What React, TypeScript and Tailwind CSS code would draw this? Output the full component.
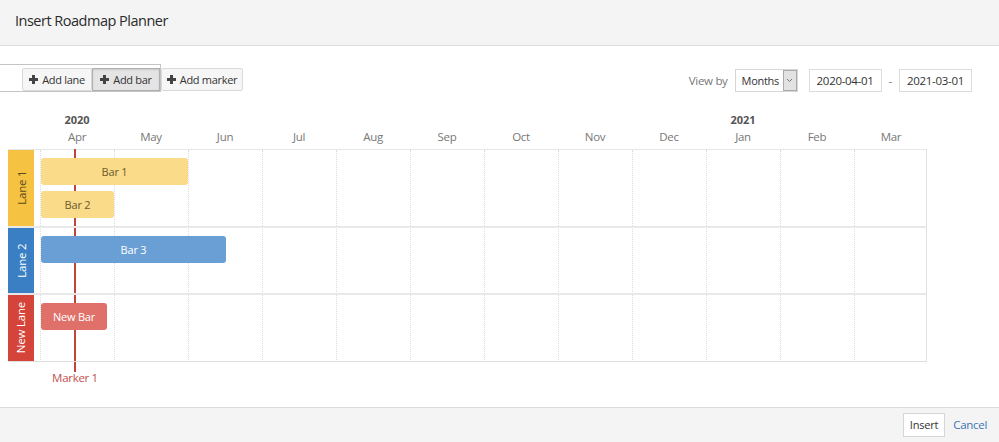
import React from 'react';

const months = ['Apr', 'May', 'Jun', 'Jul', 'Aug', 'Sep', 'Oct', 'Nov', 'Dec', 'Jan', 'Feb', 'Mar'];

type Bar = { label: string; width: number; bg: string; text: string };
type Lane = { name: string; color: string; labelText: string; height: number; bars: Bar[] };

const lanes: Lane[] = [
  {
    name: 'Lane 1',
    color: 'bg-[#f5c242]',
    labelText: 'text-[#5b4a1c]',
    height: 78,
    bars: [
      { label: 'Bar 1', width: 147, bg: 'bg-[#fadb8a]', text: 'text-[#6b5a2a]' },
      { label: 'Bar 2', width: 73, bg: 'bg-[#fadb8a]', text: 'text-[#6b5a2a]' },
    ],
  },
  {
    name: 'Lane 2',
    color: 'bg-[#3a7fc3]',
    labelText: 'text-white',
    height: 67,
    bars: [{ label: 'Bar 3', width: 185, bg: 'bg-[#6a9fd6]', text: 'text-white' }],
  },
  {
    name: 'New Lane',
    color: 'bg-[#d5443a]',
    labelText: 'text-white',
    height: 67,
    bars: [{ label: 'New Bar', width: 66, bg: 'bg-[#e0716a]', text: 'text-white' }],
  },
];

function Plus() {
  return (
    <svg width="9" height="9" viewBox="0 0 9 9" className="mr-[4px] mb-[2px] shrink-0">
      <path d="M3 0h3v3h3v3H6v3H3V6H0V3h3z" fill="#444" />
    </svg>
  );
}

function ToolButton({ children, active, width }: { children: React.ReactNode; active?: boolean; width: string }) {
  return (
    <button
      className={
        (active
          ? 'border-[#b0b0b0] bg-[#e4e4e4] shadow-[inset_0_1px_2px_rgba(0,0,0,0.12)] '
          : 'border-[#d9d9d9] bg-[#f6f6f6] rounded-[2px] ') +
        width +
        ' flex items-center justify-center shrink-0 whitespace-nowrap h-[23px] pt-px border text-[11px] tracking-[-0.3px] text-[#333]'
      }
    >
      <Plus />
      {children}
    </button>
  );
}

export default function App() {
  return (
    <div className="w-[999px] h-[442px] flex flex-col bg-white overflow-hidden font-['Open_Sans',sans-serif] text-[#333]">
      <div className="h-[46px] shrink-0 bg-[#f4f4f4] border-b border-[#dcdcdc] flex items-center px-[15px]">
        <h1 className="text-[14.5px] tracking-[-0.5px] text-[#2b2b2b] mb-[3px]">Insert Roadmap Planner</h1>
      </div>

      <div className="flex-1 relative">
        <div className="flex items-start justify-between mt-[18px] pr-[27px]">
          <div className="flex items-start">
            <div className="h-[28px] pl-[22px] border border-l-0 border-[#c4c4c4] flex items-end">
              <ToolButton width="w-[70px]">Add lane</ToolButton>
              <ToolButton width="w-[68px]" active>
                Add bar
              </ToolButton>
            </div>
            <div className="pt-[4px]">
              <ToolButton width="w-[82px]">Add marker</ToolButton>
            </div>
          </div>
          <div className="flex items-center pt-[5px] text-[11.5px] tracking-[-0.3px]">
            <span className="text-[#777] mr-[7px]">View by</span>
            <div className="flex items-center w-[63px] h-[23px] border border-[#d6d6d6] pl-[6px] bg-white">
              <span className="flex-1 pt-[1px] text-[11px]">Months</span>
              <span className="w-[14px] h-[21px] bg-[#e2e2e2] border border-[#aaa] flex items-center justify-center">
                <svg width="7" height="5" viewBox="0 0 7 5">
                  <path d="M1 1l2.5 2.5L6 1" stroke="#777" fill="none" strokeWidth="1" />
                </svg>
              </span>
            </div>
            <div className="ml-[11px] w-[73px] h-[23px] border border-[#dcdcdc] flex items-center pl-[7px]">2020-04-01</div>
            <span className="mx-[7px] text-[#777]">-</span>
            <div className="w-[73px] h-[23px] border border-[#dcdcdc] flex items-center pl-[7px]">2021-03-01</div>
          </div>
        </div>

        <div className="pl-[8px] mt-[20px]">
          <div className="flex pl-[32px] h-[15px] text-[11px] font-bold text-[#555]">
            <div className="w-[74px] text-center">2020</div>
            <div className="w-[592px]" />
            <div className="w-[74px] text-center">2021</div>
          </div>
          <div className="flex pl-[32px] h-[19px] pt-px text-[11.5px] tracking-[-0.3px] text-[#777]">
            {months.map((m) => (
              <div key={m} className="w-[74px] text-center">
                {m}
              </div>
            ))}
          </div>

          <div className="relative w-[919px] border-t border-[#e6e6e6] mt-[3px]">
            <div className="absolute left-[32px] top-0 bottom-0 flex pointer-events-none">
              {months.map((m) => (
                <div key={m} className="w-[74px] border-l border-dotted border-[#dcdcdc]" />
              ))}
            </div>
            <div className="absolute right-0 top-0 bottom-0 w-px bg-[#e0e0e0]" />
            <div className="absolute left-[66px] w-[2px] -top-px h-[223px] bg-[#c0443a]" />

            {lanes.map((lane, li) => (
              <div
                key={lane.name}
                className={
                  'relative flex ' + (li < 2 ? 'border-b-2 border-[#e8e8e8]' : 'border-b border-[#dedede]')
                }
                style={{ height: lane.height }}
              >
                <div className={`w-[26px] shrink-0 ${lane.color} flex items-center justify-center`}>
                  <span className={`-rotate-90 whitespace-nowrap text-[11.5px] tracking-[-0.2px] ${lane.labelText}`}>
                    {lane.name}
                  </span>
                </div>
                <div className="flex flex-col gap-[6px] pt-[8px] pl-[7px]">
                  {lane.bars.map((b) => (
                    <div
                      key={b.label}
                      className={`h-[27px] pt-px rounded-[3px] ${b.bg} ${b.text} text-[11px] tracking-[-0.2px] flex items-center justify-center`}
                      style={{ width: b.width }}
                    >
                      {b.label}
                    </div>
                  ))}
                </div>
              </div>
            ))}
            <div className="absolute left-[67px] -translate-x-1/2 top-[219px] text-[11.5px] tracking-[-0.3px] text-[#c0504d] whitespace-nowrap">
              Marker 1
            </div>
          </div>
        </div>
      </div>

      <div className="h-[35px] shrink-0 bg-[#f4f4f4] border-t border-[#dcdcdc] flex items-center justify-end pr-[12px]">
        <button className="h-[24px] px-[6px] bg-white border border-[#d6d6d6] text-[11px] tracking-[-0.2px] text-[#333]">
          Insert
        </button>
        <span className="ml-[8px] text-[11.5px] tracking-[-0.3px] text-[#3a74b4]">Cancel</span>
      </div>
    </div>
  );
}
